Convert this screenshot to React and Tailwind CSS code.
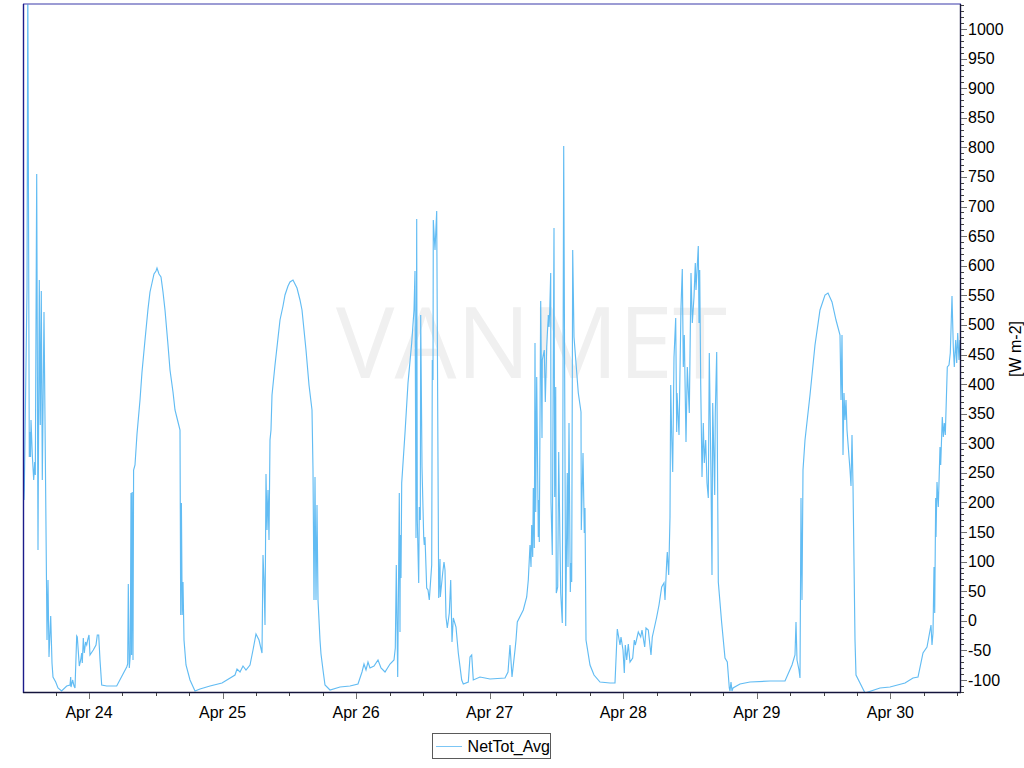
const pts = [
[24,500],[24.3,490],[27,290],[27.8,-20],[29.3,457],[30,432],[30.5,457],[31,420],[32.3,455],[33.7,480],[34.7,462],[35.3,475],[36.7,174],[38,550],[39.3,280],[40.3,425],[41.3,291],[42.3,480],[44,312],[46.2,550],[47,640],[48,580],[49,657],[50.7,616],[52,663],[53,677],[55.7,682],[58,688],[61.6,691],[66.7,686],[70,685],[70.7,677],[71,687],[72,683],[72.7,680],[73.3,683],[74,686],[75,688],[76.7,636],[77.3,637],[79.3,666],[80.7,660],[81.7,653],[82.3,663],[83.3,638],[84.3,653],[85.6,642],[86.7,645],[87.7,640],[89,635],[90,655],[91.3,653],[93.3,650],[96,645],[97.3,635],[98.7,635],[100,660],[101.7,685],[106.7,686],[116.7,686],[126.7,667],[127.7,664],[128.3,584],[129.3,668],[130.3,655],[131,493],[131.6,655],[132.2,492],[133,660],[133.6,470],[135,465],[137,434],[140,400],[142,372],[145,340],[148,309],[150,292],[152,283],[154,274],[156,271],[157,268],[159,274],[161,277],[163,292],[165,310],[168,345],[170,370],[173,392],[175,410],[178,422],[180,430],[180.7,615],[181.4,503],[182.2,615],[183,582],[184,640],[186,665],[190,680],[195,691],
[200,689],[210,686],[222,683],[235,675],[237,669],[240,672],[243,666],[246,670],[250,665],[253,650],[256,634],[259,640],[262,653],[263,555],[264,580],[265,625],[266,474],[267,530],[268,490],[269,540],[270,440],[271,430],[272,395],[275,365],[278,338],[280,320],[283,306],[285,295],[288,286],[290,282],[293,280],[295,284],[297,288],[300,300],[302,310],[304,330],[306,350],[309,385],[312,410],[313,470],[314,600],[315,477],[316,600],[317,505],[318,600],[320,640],[321,654],[323,670],[325,685],[330,690],[340,687],[350,686],[358,684],[362,672],[364,664],[366,670],[368,662],[370,668],[374,666],[378,660],[381,668],[385,672],[390,664],[394,660],[395.3,648],[396.3,565],[397.7,677],[399.3,493],[400,632],[400.3,535],[401,578],[401.7,483],[405,433],[408,383],[411.7,343],[414,310],[415,271],[416,538],[416.7,219],[417.3,520],[418.7,583],[419.3,507],[420.3,520],[420.7,315],[422,467],[423.7,537],[424.3,545],[425,537],[426.7,588],[428,590],[429.3,600],[431.7,565],[432.3,360],[433,380],[433.3,220],[435,250],[436.7,211],[438.7,598],[440,559],[440.3,597],[442.7,573],[444,562],[445,570],[446,617],[447.3,628],[449.3,613],[450.7,580],[452,642],[453.3,618],[456,627],[458.3,653],[461.7,680],[463.3,684],[468.3,682],[470,657],[471.7,655],[473.3,680],[480,677],
[490,679],[505,678],[508,672],[510,645],[512,677],[515,650],[516,640],[517.3,622],[523.3,610],[526.7,597],[528.3,580],[530,545],[531,567],[531.7,525],[532.7,557],[533.3,488],[534.3,548],[535,343],[535.7,512],[536.7,377],[538.3,537],[538.7,500],[539.3,542],[540.7,301],[542,438],[542.3,360],[544.3,350],[545.3,402],[546.7,347],[548.3,315],[549,327],[549.7,312],[550.7,273],[551,502],[552.3,555],[554,228],[554.7,497],[555.7,387],[556.3,593],[557.7,587],[558.7,452],[560.7,593],[562.3,623],[563.7,146],[565.7,626],[567.3,473],[568,567],[569,423],[570.3,592],[571,563],[571.7,582],[572.7,250],[574,337],[578.3,393],[581,412],[581.3,530],[583,453],[584.3,533],[585,508],[586,640],[590,665],[594,675],[600,682],[610,683],
[615,683],[617.3,629],[620,645],[621,637],[623,650],[624.3,673],[625.3,645],[626.7,660],[628.3,644],[630,662],[632.7,658],[634.3,640],[635.3,645],[638.3,632],[640.7,637],[642,630],[644.7,647],[646,628],[648.3,630],[651,655],[652.3,637],[654.3,628],[656.7,617],[659,605],[661.7,587],[664,583],[665,600],[666.7,562],[667.3,552],[668.7,575],[670,517],[670.7,385],[671.7,437],[672.7,472],[674,357],[675.7,318],[676.7,432],[677,393],[679,435],[681,307],[682.3,269],[683.3,367],[684.3,335],[686,442],[687.3,367],[689.3,413],[691,273],[692.3,323],[694,297],[695.3,263],[696,290],[698.3,246],[699,323],[699.7,270],[700.7,383],[702,477],[703.3,423],[704.3,463],[705.7,440],[707,483],[708.3,498],[709.3,353],[711,477],[712,575],[712.7,403],[714.7,495],[715.3,413],[716.7,352],[718.3,582],[721.7,623],[725,658],[727.3,662],[729.3,688],[730,691],[731,682],[732,691],[733,688],[740,684],[750,682],[770,681],[785,681],[792,665],[795,655],[796,622],[797,660],[799,670],[800,678],[801,498],[802,600],[803,470],[805,440],[810,395],[815,345],[820,310],[825,295],[828,293],[832,302],[836,320],[840,335],[841,400],[842,335],[843,455],[844,393],[845,420],[846,400],[847,430],[850,470],[851,486],[852,435],[853,485],[855,640],[856,675],[860,683],[865,693],[880,688],[890,687],[905,683],[913,678],[918,677],[923,653],[927,647],[931,625],[932,645],[933,633],[934,567],[934.7,613],[935.7,498],[936,537],[937,482],[938.3,507],[940,447],[940.7,465],[942.3,417],[943.3,437],[944.3,423],[945.3,435],[947.3,367],[949,365],[950.3,353],[952,296],[953.3,347],[954.3,367],[955.7,340],[956.7,363],[957.7,333],[959,360],[960,340],
];

const yOf = (v) => 680 - (v + 100) * 0.5918;
const yTicks = [];
for (let v = -120; v <= 1040; v += 10) yTicks.push(v);
const xTicks = [];
for (let i = -1; i <= 26; i++) xTicks.push(89 + i * 33.39);
const days = [24, 25, 26, 27, 28, 29, 30];
const font = "font-['Liberation_Sans',Arial,sans-serif]";

export default function App() {
  return (
    <div className={`flex h-[768px] w-[1024px] flex-col overflow-hidden bg-white ${font} text-black`}>
      <svg width="1024" height="732" viewBox="0 0 1024 732" className="block shrink-0">
        <defs>
          <clipPath id="plot"><rect x="23" y="4" width="938" height="688" /></clipPath>
        </defs>
        <text x="531.5" y="378" textAnchor="middle" fontSize="98" fontWeight="400" fill="#f0f0f0" fontFamily="'Open Sans', sans-serif">VANMET</text>
        <polyline points={pts.map((p) => p.join(",")).join(" ")} fill="none" stroke="#62bcf3" strokeWidth="1.15" clipPath="url(#plot)" />
        <line x1="23" y1="4" x2="961" y2="4" stroke="#7b7bc6" strokeWidth="1.4" />
        <line x1="23.5" y1="4" x2="23.5" y2="693" stroke="#1c1c8a" strokeWidth="1.4" />
        <line x1="23" y1="692.5" x2="961" y2="692.5" stroke="#14143c" strokeWidth="1.4" />
        <line x1="960.5" y1="4" x2="960.5" y2="693" stroke="#14143c" strokeWidth="1.4" />
        {yTicks.map((v) => {
          const y = Math.round(yOf(v)) + 0.5;
          const major = v % 50 === 0;
          return <line key={v} x1="961" y1={y} x2={major ? 967 : 964} y2={y} stroke={major ? "#707070" : "#404040"} strokeWidth="1" />;
        })}
        {xTicks.filter((x) => x > 24 && x < 960).map((x, i) => {
          const xp = Math.round(x) + 0.5;
          const major = Math.abs((x - 89) / 33.39) % 4 < 0.01;
          return <line key={i} x1={xp} y1="693" x2={xp} y2={major ? 699 : 696} stroke={major ? "#707070" : "#404040"} strokeWidth="1" />;
        })}
        {yTicks.filter((v) => v % 50 === 0 && v >= -100 && v <= 1000).map((v) => (
          <text key={v} x="968" y={yOf(v) + 5.5} fontSize="16" fill="#000">{v}</text>
        ))}
        {days.map((d, i) => (
          <text key={d} x={89 + i * 133.56} y="717.5" fontSize="16" textAnchor="middle" fill="#000">Apr {d}</text>
        ))}
        <text transform="translate(1021 349) rotate(-90)" fontSize="16" textAnchor="middle" fill="#000">[W m-2]</text>
      </svg>
      <div className="flex w-[983px] shrink-0 justify-center pt-px">
        <div className="flex h-[26px] w-[119px] items-center gap-[6px] border border-[#5a5a5a] pl-[3px] text-[16px] leading-none">
          <span className="h-px w-[26px] bg-[#7cc6f5]" />
          <span className="pt-px">NetTot_Avg</span>
        </div>
      </div>
    </div>
  );
}
